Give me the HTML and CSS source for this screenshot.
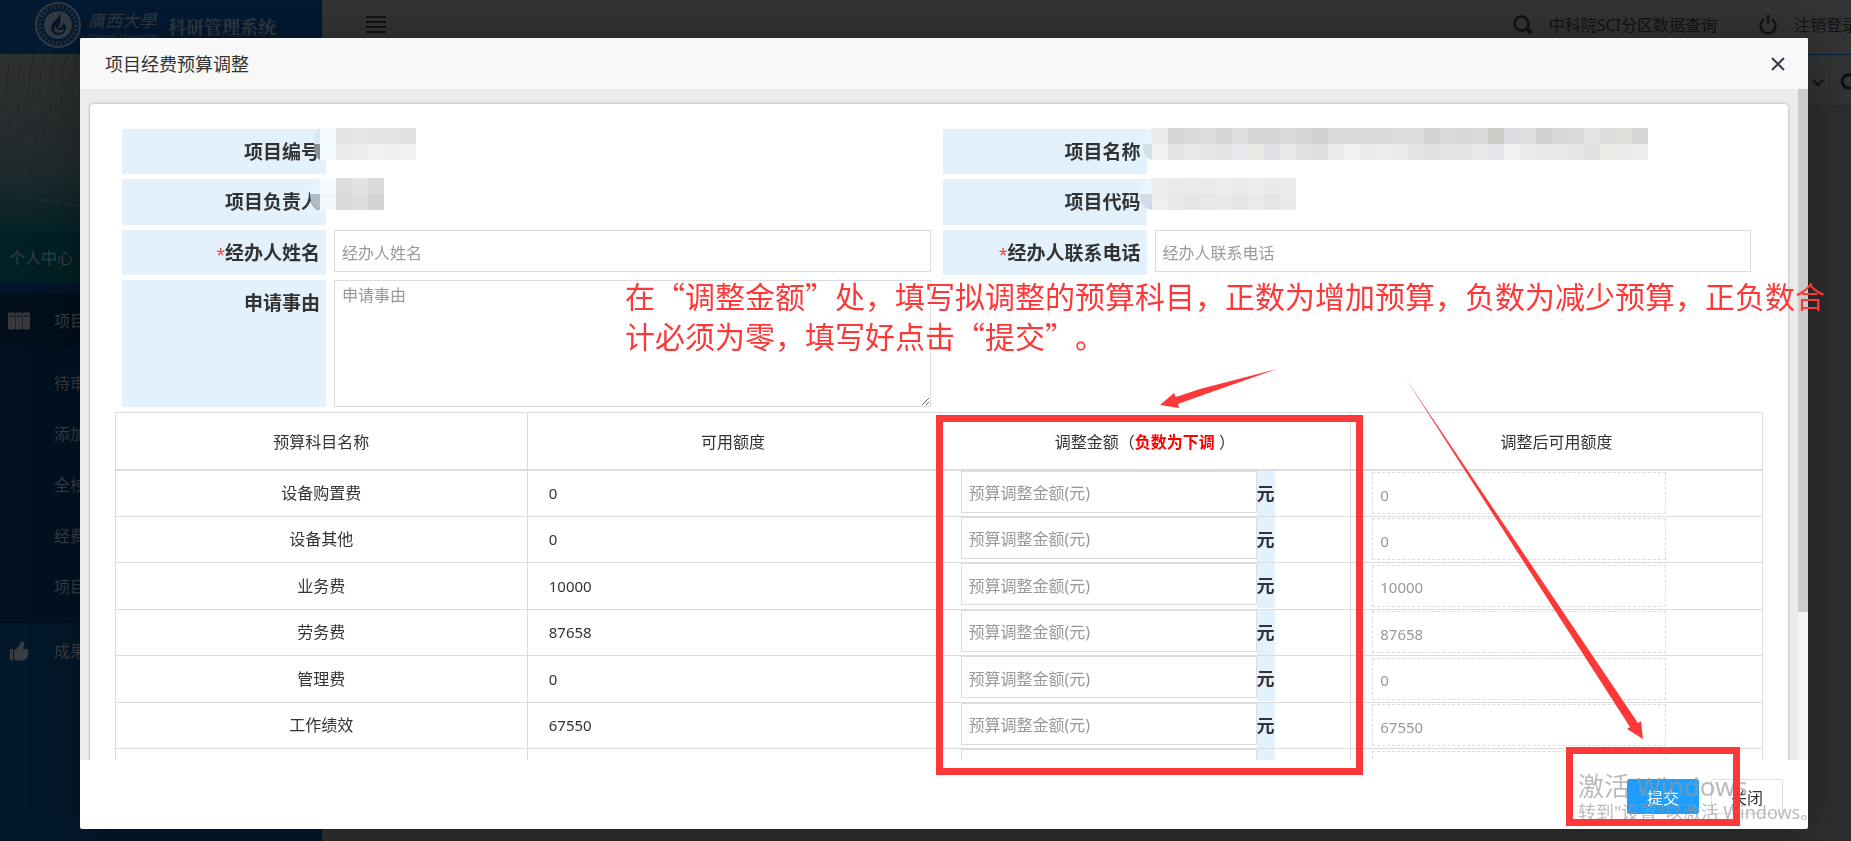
FILE: index.html
```
<!DOCTYPE html>
<html lang="zh-CN">
<head>
    <meta charset="UTF-8">
    <meta name="viewport" content="width=device-width, initial-scale=1.0">
    <title>科研管理系统</title>
    <link rel="stylesheet" href="styles.css">
</head>
<body>
    <!-- Страница под окном -->
    <div class="page">
        <aside class="sidebar">
            <div class="logo">
                <svg class="logo-mark" viewBox="0 0 46 46">
                    <circle cx="23" cy="23" r="22" fill="none" stroke="#343a42" stroke-width="2"/>
                    <circle cx="23" cy="23" r="18" fill="none" stroke="#262e38" stroke-width="4" stroke-dasharray="2 2"/>
                    <circle cx="23" cy="23" r="14" fill="#343a42"/>
                    <path d="M24 11c1 6-8 8-8 15 0 4 3 7 7 7s8-3 8-7c0-3-2-5-3-6 0 4-2 6-5 6 3-4 4-10 1-15z" fill="#04172b"/>
                    <path d="M20 24c-2 4 0 7 4 7 3 0 5-2 5-4-3 2-7 2-9-3z" fill="#343a42"/>
                </svg>
                <div class="logo-school">
                    <span class="logo-cn">廣西大學</span>
                    <span class="logo-en">Gangxi University</span>
                </div>
                <span class="logo-system">科研管理系统</span>
            </div>
            <div class="user-panel">
                <svg class="user-waves" viewBox="0 0 322 179" preserveAspectRatio="none">
                    <g fill="none" stroke="#252829">
                        <path d="M12 0q-14 50 8 100M23 0q-14 50 8 102M34 0q-14 50 8 104M45 0q-14 50 8 106M56 0q-14 50 8 108M67 0q-14 50 8 110M78 0q-14 50 8 112"/>
                    </g>
                    <path d="M20 142q30 6 60 10" fill="none" stroke="#1c3238" stroke-dasharray="1 2" stroke-width="4"/>
                </svg>
                <a href="#" class="user-link">个人中心</a>
            </div>
            <nav class="menu">
                <a href="#" class="menu-item active">
                    <svg viewBox="0 0 22 17"><path fill="#3a3a3a" fill-rule="evenodd" d="M0 1q0-1 1-1h5q1 0 1 1v15q0 1-1 1H1q-1 0-1-1zM7.500 1q0-1 1-1h5q1 0 1 1v15q0 1-1 1h-5q-1 0-1-1zM15 1q0-1 1-1h5q1 0 1 1v15q0 1-1 1h-5q-1 0-1-1zM1 3v1h5V3zM8.500 3v1h5V3zM16 3v1h5V3zM3 13v1h1v-1zM10.500 13v1h1v-1zM18 13v1h1v-1z"/></svg>
                    <span>项目</span>
                </a>
                <div class="submenu">
                    <a href="#">待审</a>
                    <a href="#">添加</a>
                    <a href="#">全校</a>
                    <a href="#">经费</a>
                    <a href="#">项目</a>
                </div>
                <a href="#" class="menu-item">
                    <svg viewBox="0 0 22 20"><path fill="#3a3d40" d="M2 8h3v11H2zM6 9c4-2 5-4 7-8 0-1 4-1 3 3l-1 4h3c2 0 3 2 2 4 0 3-1 5-3 7-3 1-8 1-11-1z"/></svg>
                    <span>成果</span>
                </a>
            </nav>
        </aside>

        <div class="main">
            <header class="topbar">
                <button class="icon-btn" aria-label="menu">
                    <svg width="20" height="18" viewBox="0 0 20 18"><path fill="#121212" d="M0 0h20v2H0zM0 5h20v2H0zM0 10h20v2H0zM0 15h20v2H0z"/></svg>
                </button>
                <div class="topbar-links">
                    <a href="#">
                        <svg width="20" height="20" viewBox="0 0 20 20" fill="none" stroke="#121212"><circle cx="8.500" cy="8.500" r="7" stroke-width="2.500"/><path d="M13.500 13.500l5 5" stroke-width="4"/></svg>
                        <span>中科院SCI分区数据查询</span>
                    </a>
                    <a href="#">
                        <svg width="20" height="20" viewBox="0 0 20 20" fill="none" stroke="#121212" stroke-width="2.500"><path d="M6 4.500a7.500 7.500 0 1 0 8 0M10 0v9"/></svg>
                        <span>注销登录</span>
                    </a>
                </div>
            </header>
            <div class="tabbar">
                <svg width="22" height="50" viewBox="0 0 22 50" fill="none" stroke="#0e0e0e" stroke-width="2"><path d="M6 25l5 5 5-5"/></svg>
                <svg class="refresh" width="22" height="50" viewBox="0 0 22 50" fill="none" stroke="#0e0e0e" stroke-width="3"><path d="M24 21a7 7 0 1 0 0 11"/></svg>
            </div>
        </div>
    </div>

    <!-- Окно корректировки бюджета -->
    <div class="overlay">
        <form class="modal">
            <div class="modal-title">
                <span>项目经费预算调整</span>
                <button type="button" class="icon-btn" aria-label="关闭窗口">
                    <svg width="14" height="14" viewBox="0 0 14 14"><path d="M1 1l12 12M13 1L1 13" stroke="#3d3b4a" stroke-width="2"/></svg>
                </button>
            </div>

            <div class="modal-body">
                <div class="scroll-area">
                    <div class="card">
                        <div class="fields">
                            <span class="label">项目编号</span>
                            <div class="value"><svg class="mosaic" id="mosaicNumber" width="112" height="32"></svg></div>
                            <span class="label">项目名称</span>
                            <div class="value"><svg class="mosaic mosaic-right" id="mosaicName" width="512" height="32"></svg></div>

                            <span class="label">项目负责人</span>
                            <div class="value"><svg class="mosaic" id="mosaicLeader" width="80" height="32"></svg></div>
                            <span class="label">项目代码</span>
                            <div class="value"><svg class="mosaic mosaic-right" id="mosaicCode" width="160" height="32"></svg></div>

                            <label class="label" for="agent"><i>*</i>经办人姓名</label>
                            <div class="value"><input type="text" id="agent" placeholder="经办人姓名"></div>
                            <label class="label" for="phone"><i>*</i>经办人联系电话</label>
                            <div class="value"><input type="text" id="phone" placeholder="经办人联系电话"></div>

                            <label class="label label-tall" for="reason">申请事由</label>
                            <div class="value"><textarea id="reason" placeholder="申请事由"></textarea></div>
                        </div>

                        <table>
                            <thead>
                                <tr>
                                    <th>预算科目名称</th>
                                    <th>可用额度</th>
                                    <th>调整金额（<b>负数为下调</b> ）</th>
                                    <th>调整后可用额度</th>
                                </tr>
                            </thead>
                            <tbody id="budgetTable"></tbody>
                        </table>
                    </div>
                </div>
                <div class="scrollbar"><div class="scrollbar-thumb"></div></div>
            </div>

            <div class="modal-footer">
                <button type="submit" class="btn btn-primary">提交</button>
                <button type="button" class="btn">关闭</button>
            </div>
        </form>
    </div>

    <!-- Водяной знак -->
    <div class="watermark">
        <p class="watermark-title">激活 Windows</p>
        <p>转到"设置"以激活 Windows。</p>
    </div>

    <!-- Пометки поверх окна -->
    <p class="note">在“调整金额”处，填写拟调整的预算科目，正数为增加预算，负数为减少预算，正负数合<br>计必须为零，填写好点击“提交”。</p>
    <div class="frame frame-amount"></div>
    <div class="frame frame-submit"></div>
    <svg class="arrows" width="1851" height="841" viewBox="0 0 1851 841" fill="#fc3838">
        <path d="M1160 405L1174 393L1176 397L1200 389L1277 369L1200 396L1178 404L1179 408Z"/>
        <path d="M1406 379L1638 723L1641 721L1643 739L1627 729L1630 727Z"/>
    </svg>

    <script>
        // Строки бюджета
        const rows = [
            ['设备购置费', '0'],
            ['设备其他', '0'],
            ['业务费', '10000'],
            ['劳务费', '87658'],
            ['管理费', '0'],
            ['工作绩效', '67550'],
            ['', '']
        ];

        document.getElementById('budgetTable').innerHTML = rows.map(([name, sum]) => `
            <tr>
                <td class="name">${name}</td>
                <td class="sum">${sum}</td>
                <td>
                    <div class="amount">
                        <input type="text" aria-label="${name}" placeholder="${name ? '预算调整金额(元)' : ''}">
                        <span class="unit">${name ? '元' : ''}</span>
                    </div>
                </td>
                <td><input type="text" class="result" value="${sum}" aria-label="${name}" readonly></td>
            </tr>
        `).join('');

        // Мозаика: первая клетка скруглена слева, остальные по 16px
        function drawMosaic(id, start, top, bottom) {
            const cells = [top, bottom].map((row, r) => row.split(' ').map((color, i) => {
                if (i === 0) {
                    const d = r === 0 ? `M16 0Q${start} 2 ${start} 16H16Z` : `M16 32Q${start} 30 ${start} 16H16Z`;
                    return `<path d="${d}" fill="#${color}"/>`;
                }
                return `<rect x="${i * 16}" y="${r * 16}" width="16" height="16" fill="#${color}"/>`;
            }).join('')).join('');
            document.getElementById(id).innerHTML = cells;
        }

        drawMosaic('mosaicNumber', 10,
            'dbe8f2 f5fbff e3e3e3 e6e6e6 e5e3e3 e3e5e4 e2e2e2',
            '8a8f98 f3fafd ebebed ececec f0f0f0 eef0ef f1f3f2');
        drawMosaic('mosaicLeader', 6,
            'e6f3fd f6fbff dcdcdd e2e2e2 dadadd',
            'b1bbc6 f2f8fd d9d9d9 dddddd d4d4d7');
        drawMosaic('mosaicName', 7,
            'e8f4fe eaeaea d6d5d3 dadbdb dcdcdc d5d6d8 dedede d6d5d3 d4d5d7 dbdad8 d5d5d7 d0d0d0 dadada dadada dbdbdb dbdbdb dcdddf dcdddf d3d5d5 d9d9d9 d6d8d7 d9d9d9 cfcdca dcdce0 dedede d1d1d1 d5d8d7 dadada e3e3e3 dcdcdc e0deda d6d6d6',
            'd3e0ec f1f1f1 e3e3e3 e9e9e9 e5e5e5 e4e4e2 e7e8eb ebe9e6 dee0e3 e8e8e8 e2e2e2 dedede eaeaea f1f1f1 eaeaea eeeeee eaeaea e3e5e4 dfe2e1 e4e4e4 e4e4e4 e8e8e8 e4e6e9 f0f0ee ebebeb e8e8e8 e9e9e9 e6e6e6 e0e0e0 edebe8 e9ebea eeeeee');
        drawMosaic('mosaicCode', 4,
            'ebf5fe ededec eaeaea ebebeb eaeaea ededed ebebeb eeeeee e9e9e9 ebebeb',
            'd0dce8 efefee e8e8e8 e5e5e3 e7e7e7 e9e9e9 e5e5e5 e9ebea e3e6e5 e9e9e9');
    </script>
</body>
</html>
```
FILE: styles.css
```
* {
    box-sizing: border-box;
}

body {
    margin: 0;
    height: 100vh;
    overflow: hidden;
    color: #333;
    background: #2e2e2e;
    font-family: "Noto Sans", "Noto Sans CJK SC", sans-serif;
    font-size: 16px;
    line-height: 24px;
}

a {
    color: inherit;
    text-decoration: none;
}

p {
    margin: 0;
}

.icon-btn {
    display: flex;
    padding: 0;
    border: none;
    background: none;
    cursor: pointer;
}

/* page */
.page {
    display: flex;
    height: 100%;
}

.sidebar {
    display: flex;
    flex-direction: column;
    width: 322px;
    background: #03182a;
    color: #3a3d40;
    white-space: nowrap;
}

.logo {
    display: flex;
    height: 54px;
    padding: 2px 0 0 35px;
    background: #031a33;
    color: #343a42;
}

.logo-mark {
    width: 46px;
    height: 46px;
}

.logo-school {
    display: flex;
    flex-direction: column;
    width: 80px;
    margin-left: 7px;
}

.logo-cn {
    padding-top: 7px;
    font-size: 17px;
    font-style: italic;
}

.logo-en {
    font-family: "Liberation Sans", sans-serif;
    font-size: 9px;
    line-height: 8px;
}

.logo-system {
    font-family: "Noto Serif CJK SC", "Noto Sans CJK SC", serif;
    font-size: 18px;
    font-weight: bold;
    line-height: 48px;
}

.user-panel {
    display: flex;
    flex-direction: column;
    height: 229px;
    background: linear-gradient(#303130, #202a2d 50%, #022226 80%);
}

.user-waves {
    width: 100%;
    height: 179px;
}

.user-link {
    height: 50px;
    padding-left: 9px;
    background: #022024;
    line-height: 50px;
}

.menu {
    padding-top: 10px;
    background: #03152a;
}

.menu-item {
    display: flex;
    gap: 24px;
    align-items: center;
    height: 55px;
    padding-left: 8px;
    background: #03182a;
}

.menu-item svg {
    width: 22px;
    height: 20px;
}

.active {
    background: #020e1c;
}

.submenu {
    display: flex;
    flex-direction: column;
    padding: 10px 0;
    background: #021122;
}

.submenu a {
    padding-left: 54px;
    line-height: 51px;
}

.main {
    flex: 1;
    min-width: 0;
    background: #2e2e2e;
    color: #121212;
}

.topbar {
    display: flex;
    align-items: center;
    justify-content: space-between;
    height: 55px;
    padding: 0 0 4px 44px;
    overflow: hidden;
    background: #343434;
    border-bottom: 1px solid #02203c;
}

.topbar-links {
    display: flex;
    gap: 41px;
    margin-right: -7px;
    white-space: nowrap;
}

.topbar-links a {
    display: flex;
    gap: 16px;
    align-items: center;
}

.tabbar {
    display: flex;
    justify-content: flex-end;
    height: 51px;
    background: #333;
    border-bottom: 1px solid #262626;
}

.refresh {
    border-left: 1px solid #2b2b2b;
}

/* modal */
.overlay {
    position: fixed;
    inset: 0;
    display: flex;
    padding: 38px 43px 12px 80px;
}

.modal {
    flex: 1;
    display: flex;
    flex-direction: column;
    min-width: 0;
    overflow: hidden;
    background: #fff;
    border-radius: 2px;
    box-shadow: 1px 1px 50px rgba(0, 0, 0, 0.3);
}

.modal-title {
    display: flex;
    align-items: center;
    justify-content: space-between;
    height: 51px;
    padding: 0 23px 0 25px;
    background: #f8f8f8;
    font-size: 18px;
}

.modal-body {
    flex: 1;
    display: flex;
    min-height: 0;
    background: #ececec;
}

.scroll-area {
    flex: 1;
    padding: 15px 10px 0;
    overflow: hidden;
}

.scrollbar {
    width: 10px;
    background: #f5f5f5;
}

.scrollbar-thumb {
    height: 78%;
    background: #cbcbcb;
}

.card {
    padding: 25px;
    background: #fff;
    border-radius: 4px;
    box-shadow: 0 0 3px rgba(0, 0, 0, 0.35);
}

.fields {
    display: grid;
    grid-template-columns: 204px 1fr 204px 1fr;
    grid-template-rows: 45px 46px 45px 127px;
    row-gap: 5px;
    padding-left: 7px;
}

.label {
    padding-right: 6px;
    background: #e3f1fd;
    font-size: 19px;
    font-weight: bold;
    line-height: 46px;
    text-align: right;
}

.label i {
    color: #f44336;
    font-size: 16px;
    font-style: normal;
    font-weight: normal;
}

.value {
    position: relative;
    padding: 0 12px 0 8px;
}

.mosaic {
    position: absolute;
    top: -1px;
    left: -22px;
}

.mosaic-right {
    left: -11px;
}

input, textarea {
    display: block;
    width: 100%;
    height: 42px;
    padding: 3px 7px 0;
    border: 1px solid #dcdcdc;
    background: #fff;
    color: #333;
    font: inherit;
}

input::placeholder, textarea::placeholder {
    color: #999;
}

textarea {
    height: 127px;
    padding-top: 2px;
}

table {
    width: 100%;
    margin-top: 5px;
    border-collapse: collapse;
    table-layout: fixed;
}

th, td {
    height: 46px;
    padding: 0 21px;
    border: 1px solid #dcdcdc;
}

th {
    height: 57px;
    padding-top: 2px;
    border-bottom-width: 2px;
    font-weight: normal;
}

th b {
    color: #f00;
}

.name {
    text-align: center;
}

.sum, .result {
    font-size: 15px;
}

tr:nth-child(2n + 3) td {
    height: 47px;
}

.amount {
    display: flex;
    height: 45px;
}

.amount input {
    width: 296px;
}

.result {
    width: 294px;
    border-style: dashed;
    background: none;
    color: #999;
}

.unit {
    width: 18px;
    background: #e3f1fd;
    font-size: 18px;
    font-weight: bold;
    line-height: 45px;
}

.modal-footer {
    display: flex;
    gap: 12px;
    justify-content: flex-end;
    height: 69px;
    padding: 19px 25px 0;
}

.btn {
    width: 72px;
    height: 35px;
    padding: 3px 0 0;
    border: 1px solid #dedede;
    border-radius: 2px;
    background: #fff;
    color: #333;
    font: inherit;
    cursor: pointer;
}

.btn-primary {
    border-color: #1e9fff;
    background: #1e9fff;
    color: #fff;
}

/* marks drawn over the window */
.watermark {
    position: fixed;
    right: 43px;
    bottom: 16px;
    width: 230px;
    color: rgba(150, 150, 150, 0.65);
    font-size: 18px;
    line-height: 26px;
    white-space: nowrap;
    pointer-events: none;
}

.watermark-title {
    font-size: 26px;
}

.note {
    position: fixed;
    top: 275px;
    left: 625px;
    color: #fc3838;
    font-family: "Noto Sans CJK SC", sans-serif;
    font-size: 30px;
    line-height: 40px;
    white-space: nowrap;
    text-spacing-trim: space-all;
    pointer-events: none;
}

.frame {
    position: fixed;
    border: 7px solid #fc3838;
    pointer-events: none;
}

.frame-amount {
    top: 415px;
    left: 936px;
    width: 427px;
    height: 360px;
}

.frame-submit {
    right: 111px;
    bottom: 15px;
    width: 174px;
    height: 79px;
}

.arrows {
    position: fixed;
    top: 0;
    left: 0;
    pointer-events: none;
}
```
